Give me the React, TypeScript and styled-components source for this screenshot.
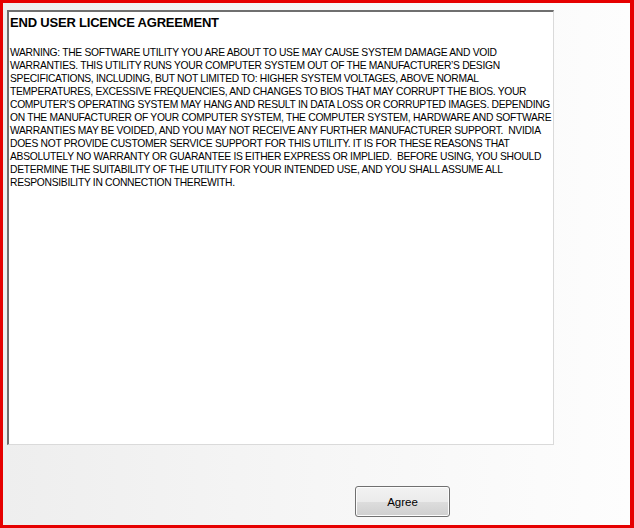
import React from "react";
import styled, { createGlobalStyle } from "styled-components";

const GlobalStyle = createGlobalStyle`
  html, body { margin: 0; padding: 0; background: #ffffff; }
  * { box-sizing: border-box; }
`;

const Frame = styled.div`
  width: 634px;
  height: 528px;
  border-style: solid;
  border-color: #e60000;
  border-width: 3px 4px 3px 3px;
  background: linear-gradient(to right, #eeeeee 0%, #f6f6f6 50%, #fdfdfd 100%);
  display: flex;
  flex-direction: column;
  padding: 7px 0 0 4px;
  font-family: "Liberation Sans", Arial, sans-serif;
`;

const LicenseBox = styled.div`
  width: 547px;
  height: 435px;
  background: #ffffff;
  border-style: solid;
  border-width: 2px 1px 1px 2px;
  border-color: #6f6f6f #dadada #dadada #6f6f6f;
  padding: 3px 1px;
  overflow: hidden;
`;

const Title = styled.h1`
  margin: 0 0 15px 0;
  font-size: 13px;
  line-height: 16px;
  font-weight: bold;
  color: #000;
  letter-spacing: -0.2px;
`;

const Body = styled.div`
  font-size: 10.3px;
  line-height: 13px;
  letter-spacing: -0.3px;
  color: #000;
`;

const Line = styled.div`
  white-space: pre;
`;

const ButtonRow = styled.div`
  display: flex;
  padding: 41px 0 0 348px;
`;

const Button = styled.button`
  width: 95px;
  height: 31px;
  border: 1px solid #707070;
  border-radius: 3px;
  background: linear-gradient(to bottom, #f2f2f2 0%, #ebebeb 50%, #dddddd 51%, #cfcfcf 100%);
  box-shadow: inset 0 0 0 1px #fcfcfc;
  font-family: "Liberation Sans", Arial, sans-serif;
  font-size: 11.5px;
  color: #000;
  padding: 0;
`;

const lines = [
  "WARNING: THE SOFTWARE UTILITY YOU ARE ABOUT TO USE MAY CAUSE SYSTEM DAMAGE AND VOID",
  "WARRANTIES. THIS UTILITY RUNS YOUR COMPUTER SYSTEM OUT OF THE MANUFACTURER\u2019S DESIGN",
  "SPECIFICATIONS, INCLUDING, BUT NOT LIMITED TO: HIGHER SYSTEM VOLTAGES, ABOVE NORMAL",
  "TEMPERATURES, EXCESSIVE FREQUENCIES, AND CHANGES TO BIOS THAT MAY CORRUPT THE BIOS. YOUR",
  "COMPUTER\u2019S OPERATING SYSTEM MAY HANG AND RESULT IN DATA LOSS OR CORRUPTED IMAGES. DEPENDING",
  "ON THE MANUFACTURER OF YOUR COMPUTER SYSTEM, THE COMPUTER SYSTEM, HARDWARE AND SOFTWARE",
  "WARRANTIES MAY BE VOIDED, AND YOU MAY NOT RECEIVE ANY FURTHER MANUFACTURER SUPPORT.  NVIDIA",
  "DOES NOT PROVIDE CUSTOMER SERVICE SUPPORT FOR THIS UTILITY. IT IS FOR THESE REASONS THAT",
  "ABSOLUTELY NO WARRANTY OR GUARANTEE IS EITHER EXPRESS OR IMPLIED.  BEFORE USING, YOU SHOULD",
  "DETERMINE THE SUITABILITY OF THE UTILITY FOR YOUR INTENDED USE, AND YOU SHALL ASSUME ALL",
  "RESPONSIBILITY IN CONNECTION THEREWITH.",
];

export default function App() {
  return (
    <>
      <GlobalStyle />
      <Frame>
        <LicenseBox>
          <Title>END USER LICENCE AGREEMENT</Title>
          <Body>
            {lines.map((l, i) => (
              <Line key={i}>{l}</Line>
            ))}
          </Body>
        </LicenseBox>
        <ButtonRow>
          <Button>Agree</Button>
        </ButtonRow>
      </Frame>
    </>
  );
}
